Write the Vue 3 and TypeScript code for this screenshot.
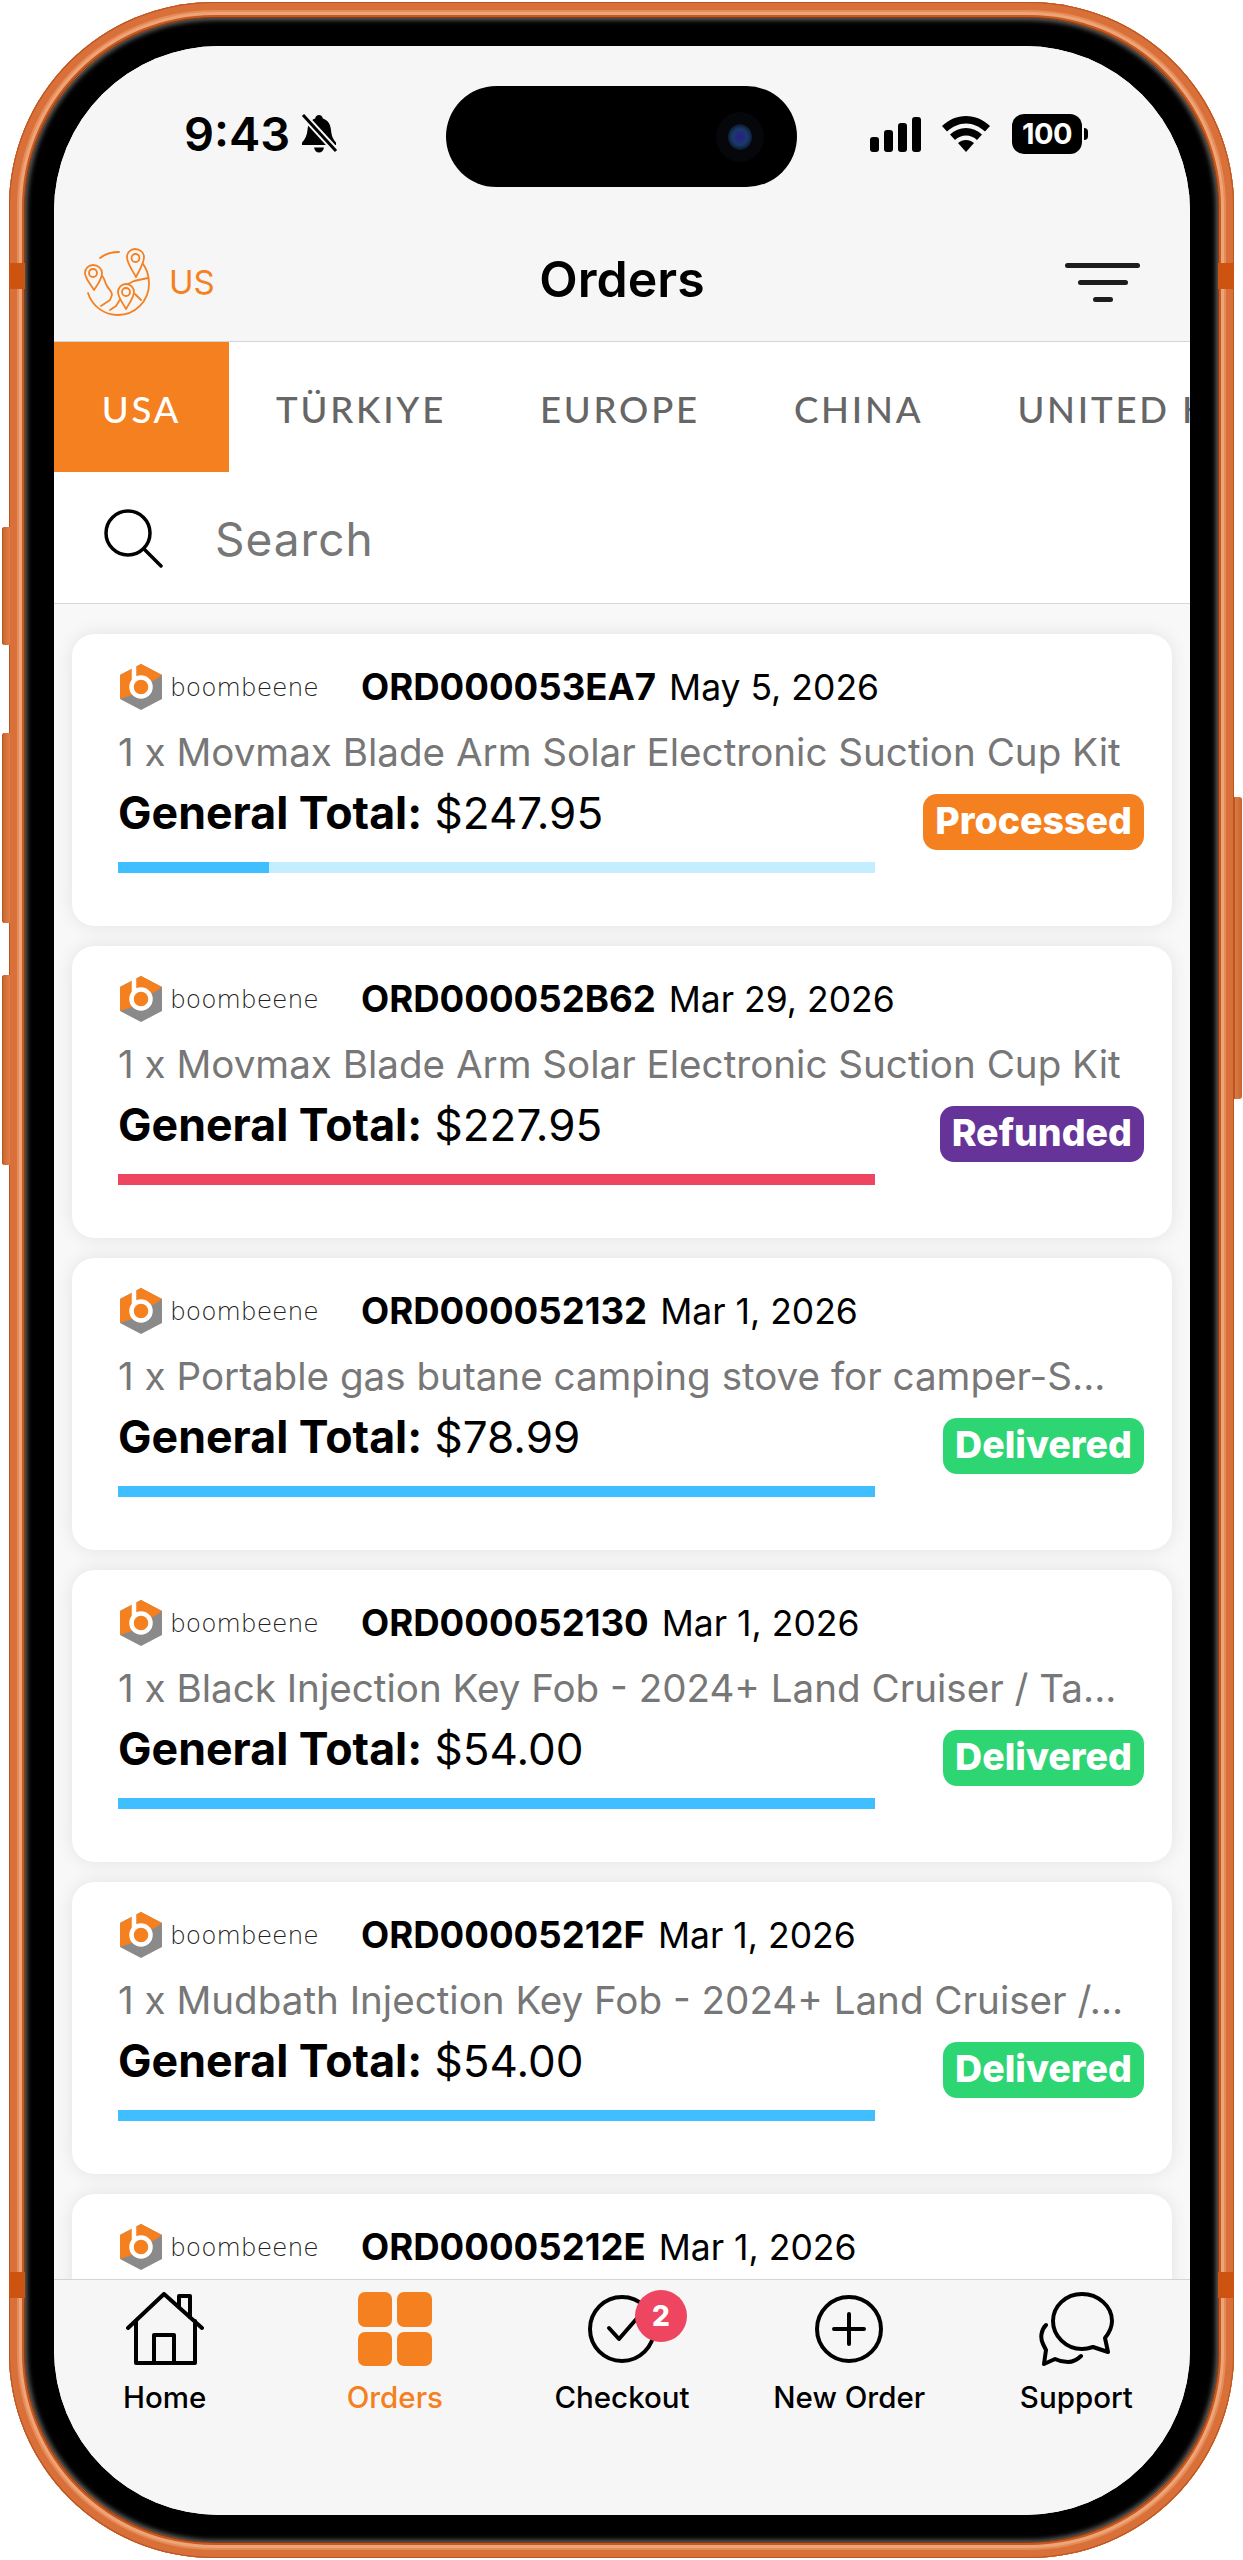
<script setup lang="ts">
interface Order {
  id: string
  date: string
  desc: string
  total: string
  status: string
  color: string
  bar: string
  track: string
  progress: number
}

const regions = ['USA', 'TÜRKIYE', 'EUROPE', 'CHINA', 'UNITED KINGDOM']

const blue = '#3fbfff'
const green = '#2ed573'
const orders: Order[] = [
  { id: 'ORD000053EA7', date: 'May 5, 2026', desc: '1 x Movmax Blade Arm Solar Electronic Suction Cup Kit', total: '$247.95', status: 'Processed', color: '#f58020', bar: blue, track: '#c4edff', progress: 20 },
  { id: 'ORD000052B62', date: 'Mar 29, 2026', desc: '1 x Movmax Blade Arm Solar Electronic Suction Cup Kit', total: '$227.95', status: 'Refunded', color: '#663399', bar: '#ee4560', track: '#ee4560', progress: 100 },
  { id: 'ORD000052132', date: 'Mar 1, 2026', desc: '1 x Portable gas butane camping stove for camper-S...', total: '$78.99', status: 'Delivered', color: green, bar: blue, track: blue, progress: 100 },
  { id: 'ORD000052130', date: 'Mar 1, 2026', desc: '1 x Black Injection Key Fob - 2024+ Land Cruiser / Ta...', total: '$54.00', status: 'Delivered', color: green, bar: blue, track: blue, progress: 100 },
  { id: 'ORD00005212F', date: 'Mar 1, 2026', desc: '1 x Mudbath Injection Key Fob - 2024+ Land Cruiser /...', total: '$54.00', status: 'Delivered', color: green, bar: blue, track: blue, progress: 100 },
  // only the top row of this card is on screen, the tab bar covers the rest
  { id: 'ORD00005212E', date: 'Mar 1, 2026', desc: '', total: '', status: '', color: green, bar: blue, track: blue, progress: 100 }
]
</script>

<template>
  <div class="page">
    <div class="phone">
      <span class="side-btn btn-a"></span>
      <span class="side-btn btn-b"></span>
      <span class="side-btn btn-c"></span>
      <span class="side-btn btn-r"></span>
      <span class="band band-tl"></span>
      <span class="band band-tr"></span>
      <span class="band band-bl"></span>
      <span class="band band-br"></span>

      <div class="bezel">
        <div class="screen">
          <div class="island">
            <span class="lens"></span>
          </div>

          <header class="header">
            <div class="status">
              <div class="status-left">
                <span class="time">9:43</span>
                <svg class="bell" viewBox="0 0 38 40">
                  <path d="M19 1c2 0 3.500 1.500 3.800 3.500C28 6 30.500 10.500 31 16c.5 6 2 9 5 12.500V31H2v-2.500C5.500 25 7 21 7.500 16 8 10.500 10 6 15.200 4.500 15.500 2.500 17 1 19 1z" fill="#000" />
                  <path d="M14 33.500h10c-.5 3-2.500 5-5 5s-4.500-2-5-5z" fill="#000" />
                  <path d="M3 1l33 36" stroke="#f6f6f6" stroke-width="7" />
                  <path d="M3 1l33 36" stroke="#000" stroke-width="3" />
                </svg>
              </div>
              <div class="status-right">
                <div class="signal">
                  <i style="height: 15px"></i>
                  <i style="height: 22px"></i>
                  <i style="height: 29px"></i>
                  <i style="height: 35px"></i>
                </div>
                <svg class="wifi" viewBox="0 0 48 36">
                  <path d="M24 0C15 0 7 3.500 0 10l5 5.500C10.500 10.500 17 7.500 24 7.500s13.500 3 19 8l5-5.500C41 3.500 33 0 24 0z" fill="#000" />
                  <path d="M24 12c-6 0-11.500 2.300-16 6.500l5 5.500c3-2.800 7-4.500 11-4.500s8 1.700 11 4.500l5-5.500C35.500 14.300 30 12 24 12z" fill="#000" />
                  <path d="M24 24c-3 0-5.500 1-8 3l8 9 8-9c-2.500-2-5-3-8-3z" fill="#000" />
                </svg>
                <div class="battery">
                  <span class="battery-body">100</span>
                  <span class="battery-nub"></span>
                </div>
              </div>
            </div>

            <div class="title-row">
              <div class="region">
                <svg class="globe" viewBox="0 0 68 68" fill="none" stroke="#f58020" stroke-width="1.800" stroke-linecap="round" stroke-linejoin="round">
                  <path d="M36 4c-7 0-14 2-19 6M50 7c10 6 16 15 16 29 0 17-14 31-31 31-14 0-26-9-30-22" />
                  <path d="M9 24c5-1 8 1 11 5 2 3 2 6 4 9 2 4 5 5 5 9l-2 5-6 4-3 2" />
                  <path d="M41 38l10-5 14-3M38 50l-5 8-6 4M52 46l6 6" />
                  <path d="M10 17c-4.500 0-8 3.500-8 8 0 5 4 9 9 17 4-6 8-11 8-17 0-4.500-4-8-9-8z" fill="#f6f6f6" />
                  <circle cx="10" cy="25" r="4" />
                  <path d="M52 1c-4.500 0-8 3.500-8 8 0 6 4 11 9 20 4-8 8-14 8-20 0-4.500-4-8-9-8z" fill="#f6f6f6" />
                  <circle cx="52.500" cy="10" r="4" />
                  <path d="M43 36c-4.500 0-8 3.500-8 8 0 5 4 10 8 17 4-7 8-12 8-17 0-4.500-3.500-8-8-8z" fill="#f6f6f6" />
                  <circle cx="43" cy="44" r="4" />
                </svg>
                <span class="region-code">US</span>
              </div>
              <h1 class="title">Orders</h1>
              <div class="filter">
                <i style="width: 75px"></i>
                <i style="width: 50px"></i>
                <i style="width: 20px"></i>
              </div>
            </div>
          </header>

          <nav class="tabs">
            <span v-for="(r, i) in regions" :key="r" class="tab" :class="{ active: i === 0 }">{{ r }}</span>
          </nav>

          <div class="search">
            <svg class="search-icon" viewBox="0 0 60 60" fill="none" stroke="#000" stroke-width="3.500" stroke-linecap="round">
              <circle cx="25" cy="25" r="22" />
              <path d="M41 41l17 17" />
            </svg>
            <span class="search-text">Search</span>
          </div>

          <main class="list">
            <article v-for="o in orders" :key="o.id" class="card">
              <div class="card-top">
                <div class="brand">
                  <svg class="brand-mark" viewBox="0 0 42 46">
                    <path d="M21 0l21 11v24L21 46 0 35V11z" fill="#8a8a8a" />
                    <path d="M21 0l21 11-7 5-14 6-9 9-12 4V11z" fill="#f58020" />
                    <path d="M14 2v22" stroke="#fff" stroke-width="4.500" fill="none" />
                    <circle cx="21" cy="23" r="9.500" fill="#f58020" stroke="#fff" stroke-width="4.500" />
                  </svg>
                  <span class="brand-name">boombeene</span>
                </div>
                <span class="order-id">{{ o.id }}</span>
                <span class="order-date">{{ o.date }}</span>
              </div>
              <template v-if="o.desc">
                <p class="desc">{{ o.desc }}</p>
                <div class="card-bottom">
                  <div class="total-col">
                    <div class="total"><b>General Total:</b> {{ o.total }}</div>
                    <div class="progress" :style="{ background: o.track }">
                      <div class="progress-fill" :style="{ width: o.progress + '%', background: o.bar }"></div>
                    </div>
                  </div>
                  <span class="badge" :style="{ background: o.color }">{{ o.status }}</span>
                </div>
              </template>
            </article>
          </main>

          <footer class="tabbar">
            <div class="nav-item">
              <svg class="nav-icon" viewBox="0 0 78 74" fill="none" stroke="#000" stroke-width="4" stroke-linecap="round" stroke-linejoin="round">
                <path d="M2 36L38 2l38 34" />
                <path d="M10 29v42h59V29" />
                <path d="M28 71V43h20v28" />
                <path d="M53 15V4h11v21" />
              </svg>
              <span>Home</span>
            </div>
            <div class="nav-item active">
              <div class="grid-icon">
                <i></i><i></i><i></i><i></i>
              </div>
              <span>Orders</span>
            </div>
            <div class="nav-item">
              <div class="check-wrap">
                <svg class="nav-icon" viewBox="0 0 78 74" fill="none" stroke="#000" stroke-width="4" stroke-linecap="round" stroke-linejoin="round">
                  <circle cx="39" cy="37" r="32" />
                  <path d="M26 36l10 11 20-23" />
                </svg>
                <span class="count">2</span>
              </div>
              <span>Checkout</span>
            </div>
            <div class="nav-item">
              <svg class="nav-icon" viewBox="0 0 78 74" fill="none" stroke="#000" stroke-width="4" stroke-linecap="round">
                <circle cx="39" cy="37" r="32" />
                <path d="M39 22v30M24 37h30" />
              </svg>
              <span>New Order</span>
            </div>
            <div class="nav-item">
              <svg class="nav-icon" viewBox="0 0 78 74" fill="none" stroke="#000" stroke-width="4" stroke-linecap="round" stroke-linejoin="round">
                <path d="M45 2c-16 0-29 12-29 27 0 15 13 28 29 28 4 0 8-1 11-2l15 5-3-14c4-5 7-11 7-17C75 14 61 2 45 2z" />
                <path d="M9 33C4 38 3 46 6 52l3 6-2 14 11-5c4 2 8 3 13 3 5 0 9-2 13-6" />
              </svg>
              <span>Support</span>
            </div>
          </footer>
        </div>
      </div>
    </div>
  </div>
</template>

<style>
html,
body {
  margin: 0;
  background: #fff;
}
</style>

<style scoped>
.page {
  width: 1243px;
  height: 2560px;
  padding: 2px 9px 2px 9px;
  box-sizing: border-box;
  background: #fff;
  overflow: hidden;
}

.phone {
  position: relative;
  height: 2556px;
  width: 1225px;
  padding: 16px;
  box-sizing: border-box;
  border-radius: 205px;
  background: #d9703a;
  box-shadow: inset 0 0 0 1px #b9551f, inset 0 0 0 8px #d9703a, inset 0 0 0 10px #e68c58, inset 0 0 0 13px #eea476, inset 0 0 0 15px #c25a24, inset 0 0 0 16px #8f3a0c;
}

.side-btn {
  position: absolute;
  left: -7px;
  width: 8px;
  border-radius: 3px 0 0 3px;
  background: linear-gradient(90deg, #c9632c, #e07f48);
  box-shadow: inset 1px 0 0 #b8561f;
}

.btn-a {
  top: 525px;
  height: 118px;
}

.btn-b {
  top: 731px;
  height: 190px;
}

.btn-c {
  top: 973px;
  height: 190px;
}

.btn-r {
  left: auto;
  right: -8px;
  top: 795px;
  height: 302px;
  border-radius: 0 3px 3px 0;
  background: linear-gradient(270deg, #c9632c, #e07f48);
}

.band {
  position: absolute;
  width: 16px;
  height: 26px;
  background: #cc5410;
}

.band-tl {
  left: 0;
  top: 261px;
}

.band-tr {
  right: 0;
  top: 261px;
}

.band-bl {
  left: 0;
  top: 2270px;
}

.band-br {
  right: 0;
  top: 2270px;
}

.bezel {
  height: 100%;
  padding: 28px 28px 27px 29px;
  box-sizing: border-box;
  border-radius: 190px;
  background: #000;
  box-shadow: inset 0 0 5px 2px #666;
}

.screen {
  position: relative;
  height: 100%;
  display: flex;
  flex-direction: column;
  overflow: hidden;
  border-radius: 165px;
  background: #f6f6f6;
  font-family: Inter, "Noto Sans", sans-serif;
  color: #000;
}

.island {
  position: absolute;
  top: 40px;
  left: 392px;
  width: 351px;
  height: 101px;
  border-radius: 51px;
  background: #000;
  z-index: 2;
}

.lens {
  position: absolute;
  left: 282px;
  top: 38px;
  width: 24px;
  height: 26px;
  border-radius: 50%;
  background: radial-gradient(circle, #2a1c88 0, #1a3a68 45%, #050a14 85%);
  box-shadow: 0 0 0 12px #05070b;
}

.header {
  flex: none;
  height: 296px;
  padding-top: 68px;
  box-sizing: border-box;
  background: #f6f6f6;
  border-bottom: 1px solid #d4d4d4;
}

.status {
  height: 40px;
  padding: 0 102px 0 130px;
  display: flex;
  justify-content: space-between;
  align-items: center;
}

.status-left {
  display: flex;
  align-items: center;
  gap: 10px;
}

.time {
  font-size: 47px;
  line-height: 40px;
  font-weight: 600;
}

.bell {
  width: 38px;
  height: 40px;
}

.status-right {
  display: flex;
  align-items: center;
}

.signal {
  display: flex;
  align-items: flex-end;
  gap: 5px;
  height: 35px;
  margin-right: 21px;
}

.signal i {
  display: block;
  width: 9px;
  border-radius: 3px;
  background: #000;
}

.wifi {
  width: 48px;
  height: 36px;
  margin-right: 22px;
}

.battery {
  display: flex;
  align-items: center;
}

.battery-body {
  width: 70px;
  height: 40px;
  border-radius: 12px;
  background: #000;
  color: #fff;
  font-size: 29px;
  font-weight: 700;
  line-height: 40px;
  text-align: center;
  letter-spacing: -0.5px;
}

.battery-nub {
  width: 4px;
  height: 12px;
  margin-left: 2px;
  border-radius: 0 6px 6px 0;
  background: #000;
}

.title-row {
  margin-top: 94px;
  height: 68px;
  padding: 0 50px;
  display: grid;
  grid-template-columns: 1fr auto 1fr;
  align-items: center;
}

.region {
  display: flex;
  align-items: center;
  gap: 18px;
  margin-left: -21px;
}

.globe {
  width: 68px;
  height: 68px;
}

.region-code {
  color: #f58020;
  font-size: 33px;
}

.title {
  margin: 0 0 5px;
  font-size: 50px;
  font-weight: 600;
  line-height: 63px;
}

.filter {
  display: flex;
  flex-direction: column;
  align-items: center;
  gap: 12px;
  justify-self: end;
}

.filter i {
  display: block;
  height: 5px;
  border-radius: 3px;
  background: #1d1d1f;
}

.tabs {
  flex: none;
  height: 130px;
  display: flex;
  background: #fff;
  overflow: hidden;
  font-family: Lato, sans-serif;
}

.tab {
  flex: none;
  height: 130px;
  padding: 0 47px;
  line-height: 134px;
  font-size: 36.5px;
  font-weight: 500;
  letter-spacing: 2.8px;
  color: #666;
}

.tab.active {
  box-sizing: border-box;
  width: 175px;
  padding: 0;
  text-align: center;
  background: #f58020;
  color: #fff;
}

.search {
  flex: none;
  height: 132px;
  display: flex;
  align-items: center;
  padding-left: 49px;
  gap: 52px;
  background: #fff;
  border-bottom: 1px solid #d8d8d8;
  box-sizing: border-box;
}

.search-icon {
  width: 60px;
  height: 60px;
}

.search-text {
  padding-top: 3px;
  font-size: 46px;
  color: #777;
  letter-spacing: 1px;
}

.list {
  flex: 1;
  min-height: 0;
  overflow: hidden;
  padding: 30px 18px 0;
  display: flex;
  flex-direction: column;
  gap: 20px;
  background: #f8f8f8;
}

.card {
  flex: none;
  height: 292px;
  box-sizing: border-box;
  padding: 30px 28px 0 46px;
  border-radius: 22px;
  background: #fff;
  box-shadow: 0 0 18px rgba(0, 0, 0, 0.09);
}

.card-top {
  display: flex;
  align-items: center;
  height: 46px;
}

.brand {
  display: flex;
  align-items: center;
  width: 241px;
  flex: none;
  margin-left: 2px;
}

.brand-mark {
  width: 42px;
  height: 46px;
  flex: none;
}

.brand-name {
  margin-left: 8px;
  font-family: "DejaVu Sans", sans-serif;
  font-size: 25px;
  font-weight: 200;
  color: #222;
}

.order-id {
  font-size: 36.6px;
  font-weight: 700;
}

.order-date {
  margin-left: 13px;
  font-size: 35.5px;
}

.desc {
  margin: 18px 0 0;
  font-size: 38.6px;
  line-height: 48px;
  color: #777;
  white-space: nowrap;
}

.card-bottom {
  margin-top: 12px;
  display: flex;
  justify-content: space-between;
  align-items: flex-start;
}

.total-col {
  width: 757px;
}

.total {
  font-size: 44px;
  line-height: 50px;
}

.total b {
  font-size: 44.7px;
  font-weight: 700;
}

.progress {
  height: 11px;
  margin-top: 24px;
}

.progress-fill {
  height: 100%;
}

.badge {
  height: 56px;
  margin-top: 6px;
  padding: 0 12px;
  border-radius: 14px;
  color: #fff;
  font-size: 37.5px;
  font-weight: 800;
  line-height: 54px;
}

.tabbar {
  flex: none;
  height: 236px;
  box-sizing: border-box;
  padding-top: 12px;
  display: grid;
  grid-template-columns: repeat(5, 1fr);
  align-items: start;
  background: #f6f6f6;
  border-top: 1px solid #d4d4d4;
  position: relative;
  z-index: 1;
}

.nav-item {
  display: flex;
  flex-direction: column;
  align-items: center;
  gap: 14px;
  font-size: 29.5px;
  font-weight: 500;
  line-height: 34px;
}

.nav-item:first-child {
  padding-right: 6px;
}

.nav-item.active {
  color: #f58020;
}

.nav-icon {
  width: 78px;
  height: 74px;
  display: block;
}

.grid-icon {
  width: 74px;
  height: 74px;
  display: grid;
  grid-template-columns: 1fr 1fr;
  gap: 5px;
}

.grid-icon i {
  display: block;
  border-radius: 7px;
  background: #f58020;
}

.check-wrap {
  position: relative;
}

.count {
  position: absolute;
  top: -2px;
  left: 52px;
  width: 52px;
  height: 52px;
  border-radius: 50%;
  background: #ee4560;
  color: #fff;
  font-size: 28px;
  font-weight: 800;
  line-height: 52px;
  text-align: center;
}
</style>
